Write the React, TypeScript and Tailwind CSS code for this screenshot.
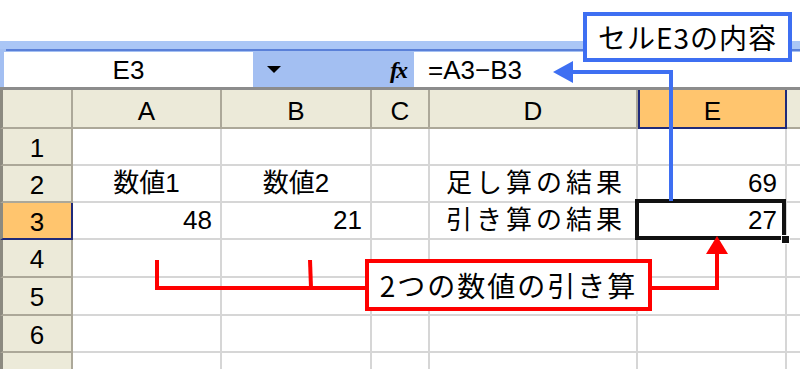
const cols = ['A', 'B', 'C', 'D', 'E'];
const colWidths = ['w-[149px]', 'w-[150px]', 'w-[58px]', 'w-[208px]', 'w-[149px]'];
const rowHeights = ['h-[37px]', 'h-[37px]', 'h-[37px]', 'h-[38px]', 'h-[38px]', 'h-[37px]', 'h-[37px]'];

type Cell = { text?: string; align?: 'left' | 'center' | 'right'; spaced?: boolean };

const data: Record<number, Cell[]> = {
  2: [
    { text: '数値1', align: 'center' },
    { text: '数値2', align: 'center' },
    {},
    { text: '足し算の結果', align: 'left', spaced: true },
    { text: '69', align: 'right' },
  ],
  3: [
    { text: '48', align: 'right' },
    { text: '21', align: 'right' },
    {},
    { text: '引き算の結果', align: 'left', spaced: true },
    { text: '27', align: 'right' },
  ],
};

function FormulaBar() {
  return (
    <div className="h-[49px] bg-[#a3bff2] flex flex-col">
      <div className="h-[8px] bg-[#aac6f6]" />
      <div className="h-[2px] bg-[#5a80d8] ml-[6px]" />
      <div className="h-[1px]" />
      <div className="h-[35px] flex">
        <div className="w-[4px]" />
        <div className="w-[249px] bg-white flex items-center justify-center text-[26px] leading-none">E3</div>
        <div className="w-[161px] flex items-center">
          <div className="ml-[14px] w-0 h-0 border-l-[7px] border-r-[7px] border-t-[7px] border-l-transparent border-r-transparent border-t-black" />
          <div className="ml-auto mr-[8px] text-[24px] leading-none italic font-bold font-['Liberation_Serif',serif] tracking-[-2px]">fx</div>
        </div>
        <div className="flex-1 bg-white flex items-center pl-[14px] text-[26px] leading-none">=A3−B3</div>
      </div>
      <div className="h-[3px] bg-[#8c8c8c]" />
    </div>
  );
}

function HeaderRow() {
  return (
    <div className="flex h-[39px]">
      <div className="w-[73px] bg-[#ecead9] border-l-[3px] border-[#8c8a80] border-r-2 border-r-[#aca899] border-b-2 border-b-[#aca899]" />
      {cols.map((c, i) => {
        const sel = c === 'E';
        return (
          <div
            key={c}
            className={
              colWidths[i] +
              ' flex items-center justify-center text-[26px] leading-none pt-[5px] ' +
              (sel
                ? 'bg-[#ffc56e] border-l-2 border-l-[#1f2a7a] border-r-2 border-r-[#1f2a7a] border-b-2 border-b-[#1f2a7a]'
                : 'bg-[#ecead9] border-r-2 border-[#aca899] border-b-2')
            }
          >
            {c}
          </div>
        );
      })}
      <div className="flex-1 bg-[#ecead9] border-b-2 border-[#aca899]" />
    </div>
  );
}

function Row({ n }: { n: number }) {
  const cells = data[n] || [];
  const sel = n === 3;
  return (
    <div className={'flex ' + rowHeights[n - 1]}>
      <div
        className={
          'w-[73px] border-l-[3px] border-l-[#8c8a80] flex items-center justify-center text-[26px] leading-none pt-[2px] ' +
          (sel
            ? 'bg-[#ffc56e] border-r-2 border-r-[#1f2a7a] border-b-2 border-b-[#1f2a7a]'
            : 'bg-[#ecead9] border-r-2 border-r-[#aca899] border-b-2 border-b-[#aca899]')
        }
      >
        {n <= 6 ? n : ''}
      </div>
      {cols.map((c, i) => {
        const cell = cells[i] || {};
        const justify =
          cell.align === 'right' ? 'justify-end pr-[8px]' : cell.align === 'center' ? 'justify-center' : 'justify-start pl-[16px]';
        return (
          <div
            key={c}
            className={
              colWidths[i] +
              ' relative bg-white border-r-2 border-b-2 border-[#d6d6d6] flex items-end pb-[3px] text-[26px] leading-[30px] ' +
              justify +
              (cell.spaced ? ' tracking-[4px]' : '') +
              (sel && c === 'E' ? ' z-10' : '')
            }
          >
            {cell.text}
            {sel && c === 'E' && (
              <>
                <div className="absolute -left-[3px] -top-[4px] -right-[1px] -bottom-[2px] border-[4px] border-[#111]" />
                <div className="absolute -right-[5px] -bottom-[6px] w-[9px] h-[9px] bg-[#111] border border-white" />
              </>
            )}
          </div>
        );
      })}
      <div className="flex-1 bg-white border-b-2 border-[#d6d6d6]" />
    </div>
  );
}

export default function App() {
  return (
    <div className="w-[800px] h-[369px] bg-white relative overflow-hidden text-black font-['Liberation_Sans','Noto_Sans_CJK_JP',sans-serif]">
      <div className="h-[41px]" />
      <FormulaBar />
      <HeaderRow />
      {[1, 2, 3, 4, 5, 6, 7].map((n) => (
        <Row key={n} n={n} />
      ))}

      {/* annotation lines */}
      <svg className="absolute inset-0 pointer-events-none z-20" width="800" height="369">
        <polyline points="671,201 671,72 570,72" fill="none" stroke="#3e6ff2" strokeWidth="4" />
        <polygon points="553,72 573,61 573,83" fill="#3e6ff2" />
        <polyline points="157,260 157,288 367,288" fill="none" stroke="#ff0000" strokeWidth="4" />
        <line x1="310" y1="260" x2="311" y2="288" stroke="#ff0000" strokeWidth="4" />
        <polyline points="650,288 717,288 717,252" fill="none" stroke="#ff0000" strokeWidth="4" />
        <polygon points="717,236 706,254 728,254" fill="#ff0000" />
      </svg>

      {/* callouts */}
      <div className="absolute z-20 left-[583px] top-[12px] w-[209px] h-[50px] bg-white border-[4px] border-[#3e6ff2] flex items-center justify-center text-[28px] leading-none tracking-[1px] font-['Noto_Sans_CJK_JP',sans-serif]">
        セルE3の内容
      </div>
      <div className="absolute z-20 left-[365px] top-[259px] w-[287px] h-[52px] bg-white border-[4px] border-[#ff0000] flex items-center justify-center text-[28px] leading-none tracking-[2px] font-['Noto_Sans_CJK_JP',sans-serif]">
        2つの数値の引き算
      </div>
    </div>
  );
}
